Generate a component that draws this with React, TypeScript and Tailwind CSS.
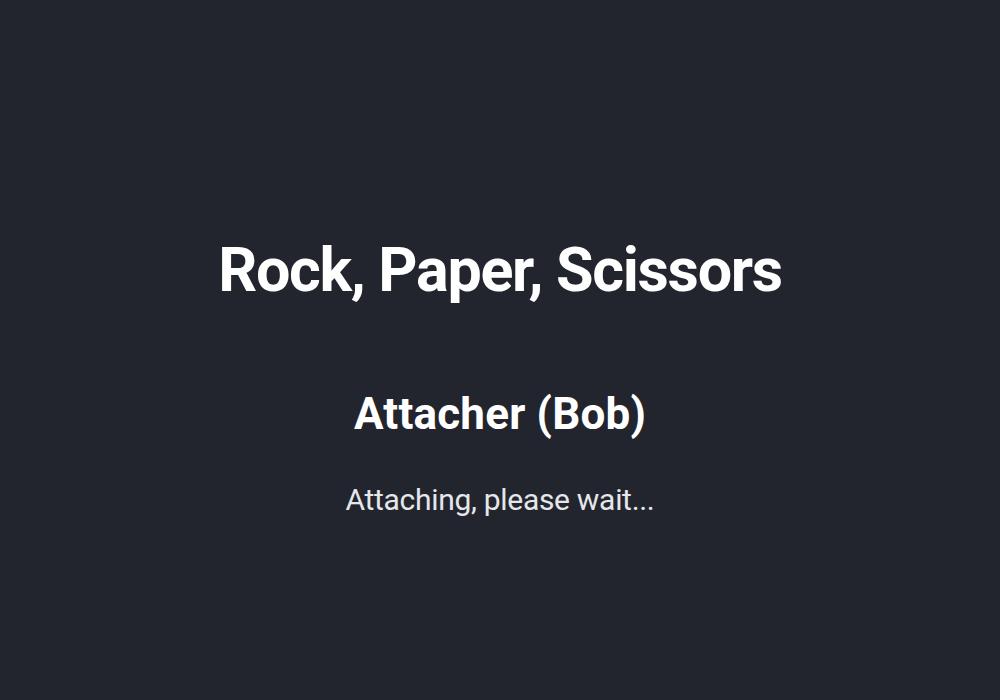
export default function App() {
  return (
    <div className="w-full h-[700px] bg-[#23252e] flex flex-col items-center pt-[240px] text-white font-['Roboto',sans-serif]">
      <h1 className="text-[61px] font-bold leading-none tracking-[-1.3px]">Rock, Paper, Scissors</h1>
      <h2 className="text-[44px] font-bold leading-none tracking-[0.2px] mt-[91px]">Attacher (Bob)</h2>
      <p className="text-[30px] text-gray-200 leading-none tracking-[-0.3px] mt-[49px]">Attaching, please wait...</p>
    </div>
  );
}
